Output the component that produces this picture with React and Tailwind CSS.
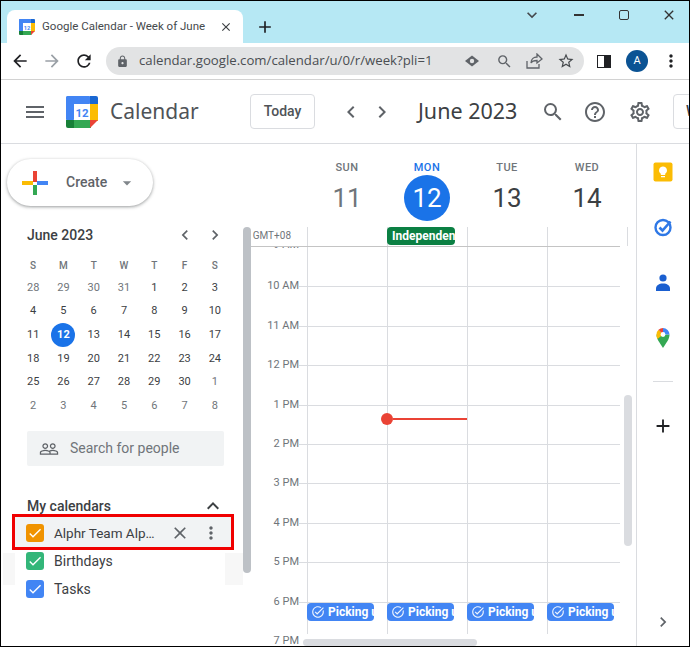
import React from "react";
import {
  MdMenu, MdChevronLeft, MdChevronRight, MdSearch, MdHelpOutline, MdOutlineSettings,
  MdArrowBack, MdArrowForward, MdRefresh, MdLock, MdStarBorder, MdClose, MdMoreVert,
  MdExpandLess, MdPeopleOutline, MdAdd, MdKeyboardArrowDown, MdCheck, MdArrowDropDown,
  MdOutlineTaskAlt,
} from "react-icons/md";

function CalLogo({ size }) {
  return (
    <svg width={size} height={size} viewBox="0 0 32 32" className="shrink-0">
      <rect x="0" y="0" width="25" height="8" rx="2" fill="#4285f4" />
      <rect x="0" y="0" width="8" height="25" rx="2" fill="#4285f4" />
      <rect x="24" y="8" width="8" height="17" fill="#fbbc04" />
      <rect x="8" y="24" width="17" height="8" fill="#34a853" />
      <path d="M0 24h8v8H2a2 2 0 0 1-2-2z" fill="#188038" />
      <path d="M24 0h6a2 2 0 0 1 2 2v6h-8z" fill="#1967d2" />
      <path d="M24 24h8l-8 8z" fill="#ea4335" />
      <rect x="8" y="8" width="16" height="16" fill="#fff" />
      <text x="16" y="21" textAnchor="middle" fontSize="11.5" fontWeight="700" fontFamily="Roboto, sans-serif" fill="#4285f4">12</text>
    </svg>
  );
}

const miniWeeks = [
  [[28, 0], [29, 0], [30, 0], [31, 0], [1, 1], [2, 1], [3, 1]],
  [[4, 1], [5, 1], [6, 1], [7, 1], [8, 1], [9, 1], [10, 1]],
  [[11, 1], [12, 2], [13, 1], [14, 1], [15, 1], [16, 1], [17, 1]],
  [[18, 1], [19, 1], [20, 1], [21, 1], [22, 1], [23, 1], [24, 1]],
  [[25, 1], [26, 1], [27, 1], [28, 1], [29, 1], [30, 1], [1, 0]],
  [[2, 0], [3, 0], [4, 0], [5, 0], [6, 0], [7, 0], [8, 0]],
];

const hours = ["9 AM", "10 AM", "11 AM", "12 PM", "1 PM", "2 PM", "3 PM", "4 PM", "5 PM"];

function Check({ color }) {
  return (
    <span className="flex h-[18px] w-[18px] shrink-0 items-center justify-center rounded-[3px]" style={{ backgroundColor: color }}>
      <MdCheck size={16} color="#fff" />
    </span>
  );
}

function Picking() {
  return (
    <div className="-ml-px flex h-[18px] w-[67px] items-center gap-[3px] overflow-hidden whitespace-nowrap rounded-[4px] bg-[#4285f4] pl-[4px] text-[12px] font-bold text-white">
      <MdOutlineTaskAlt size={14} className="shrink-0 opacity-90" />
      <span>Picking up</span>
    </div>
  );
}

function HourRow({ label, index }) {
  const widths = ["w-[80px]", "w-[80px]", "w-[80px]", "w-[73px]"];
  return (
    <div className="flex h-[39.4px] shrink-0">
      <div className="w-[56px] shrink-0 text-right text-[11px] leading-[14px] text-[#70757a]">
        <span className={"block " + (index === 0 ? "-translate-y-[9px]" : "-translate-y-[7px]")}>{label}</span>
      </div>
      <div className={"w-[8px] shrink-0 " + (index === 0 ? "" : "border-t border-[#dadce0]")} />
      {widths.map((w, c) => (
        <div key={c} className={"relative shrink-0 border-l border-[#dadce0] " + w + (index === 0 ? "" : " border-t")}>
          {label === "1 PM" && c === 1 ? (
            <div className="absolute left-[-7px] top-[7px] flex items-center">
              <span className="h-[12px] w-[12px] rounded-full bg-[#ea4335]" />
              <span className="h-[2px] w-[74px] bg-[#ea4335]" />
            </div>
          ) : null}
        </div>
      ))}
    </div>
  );
}

export default function App() {
  return (
    <div className="relative box-border flex h-[647px] w-[690px] flex-col overflow-hidden border border-black bg-white font-['Roboto',sans-serif] text-[#3c4043]">
      {/* tab strip */}
      <div className="flex h-[42px] shrink-0 items-end bg-[#b6e8f4] pl-[6px]">
        <div className="flex h-[33px] w-[236px] items-center rounded-t-[8px] bg-white pl-[12px]">
          <CalLogo size={16} />
          <span className="ml-[7px] w-[169px] overflow-hidden whitespace-nowrap text-[11.5px] text-[#45494d]">Google Calendar - Week of June</span>
          <MdClose size={14} className="ml-[8px] text-[#3c4043]" />
        </div>
        <MdAdd size={20} className="mb-[6px] ml-[12px] text-[#202124]" />
        <div className="mb-[18px] ml-auto flex items-center text-[#45494d]">
          <MdKeyboardArrowDown size={20} />
          <span className="ml-[32px] h-[1.5px] w-[10px] bg-[#333]" />
          <span className="ml-[35px] h-[10px] w-[10px] rounded-[2px] border border-[#333]" />
          <MdClose size={16} className="ml-[32px] mr-[12px] text-[#333]" />
        </div>
      </div>
      {/* toolbar */}
      <div className="flex h-[37px] shrink-0 items-center border-b border-[#d2d2d2] bg-white pl-[9px]">
        <MdArrowBack size={20} className="text-[#202124]" />
        <MdArrowForward size={20} className="ml-[12px] text-[#9aa0a6]" />
        <MdRefresh size={20} className="ml-[12px] text-[#202124]" />
        <div className="ml-[12px] flex h-[28px] w-[478px] items-center rounded-full bg-[#e2e3e4] pl-[10px]">
          <MdLock size={13} className="text-[#5f6368]" />
          <span className="ml-[10px] w-[314px] whitespace-nowrap font-['Open_Sans',sans-serif] text-[13.2px] text-[#4a4e52]">calendar.google.com/calendar/u/0/r/week?pli=1</span>
          <svg width="16" height="12" viewBox="0 0 16 12" className="ml-[11px] shrink-0">
            <path d="M8 0.5 15 6l-7 5.5L1 6z" fill="#5f6368" />
            <circle cx="8" cy="6" r="2.2" fill="#e2e3e4" />
          </svg>
          <MdSearch size={17} className="ml-[16px] shrink-0 text-[#5f6368]" />
          <svg width="18" height="16" viewBox="0 0 18 16" fill="none" stroke="#5f6368" strokeWidth="1.3" className="ml-[12px] shrink-0">
            <path d="M2 8v7h12v-4" />
            <path d="M6 10c0-4 3-6 6-6V1l5 5-5 4V7.500c-3 0-5 .5-6 2.500z" />
          </svg>
          <MdStarBorder size={18} className="ml-[14px] shrink-0 text-[#45494d]" />
        </div>
        <span className="ml-[13px] flex h-[13px] w-[14px] border-[1.5px] border-[#202124]">
          <span className="ml-auto h-full w-[6px] bg-[#202124]" />
        </span>
        <span className="ml-[15px] flex h-[22px] w-[22px] items-center justify-center rounded-full bg-[#0b5394] text-[11px] text-white">A</span>
        <MdMoreVert size={20} className="ml-[13px] text-[#202124]" />
      </div>
      {/* calendar header */}
      <div className="flex h-[64px] shrink-0 items-center overflow-hidden border-b border-[#dadce0] pl-[22px]">
        <MdMenu size={24} className="shrink-0 text-[#5f6368]" />
        <div className="ml-[19px]"><CalLogo size={32} /></div>
        <span className="ml-[12px] w-[88px] shrink-0 whitespace-nowrap font-['Noto_Sans',sans-serif] text-[21px] text-[#4f5357]">Calendar</span>
        <span className="ml-[52px] flex h-[35px] w-[65px] shrink-0 items-center justify-center rounded-[4px] border border-[#dadce0] text-[14px] font-medium text-[#4f5357]">Today</span>
        <MdChevronLeft size={24} className="ml-[24px] shrink-0 text-[#5f6368]" />
        <MdChevronRight size={24} className="ml-[7px] shrink-0 text-[#5f6368]" />
        <span className="ml-[24px] w-[100px] shrink-0 whitespace-nowrap font-['Noto_Sans',sans-serif] text-[21.5px] text-[#3c4043]">June 2023</span>
        <MdSearch size={24} className="ml-[23px] shrink-0 text-[#5f6368]" />
        <MdHelpOutline size={24} className="ml-[18px] shrink-0 text-[#5f6368]" />
        <MdOutlineSettings size={24} className="ml-[21px] shrink-0 text-[#5f6368]" />
        <span className="ml-[21px] flex h-[35px] w-[40px] shrink-0 items-center rounded-l-[4px] border border-[#dadce0] pl-[12px] text-[14px] font-medium">W</span>
      </div>
      {/* body */}
      <div className="flex min-h-0 flex-1">
        {/* sidebar */}
        <aside className="flex w-[242px] shrink-0 flex-col overflow-hidden">
          <div className="ml-[6px] mt-[15px] flex h-[47px] w-[146px] shrink-0 items-center rounded-full bg-white pl-[15px] shadow-[0_1px_3px_1px_rgba(60,64,67,.2),0_1px_2px_rgba(60,64,67,.25)]">
            <svg width="26" height="26" viewBox="0 0 26 26">
              <rect x="11" y="1" width="4" height="11" fill="#ea4335" />
              <rect x="15" y="11" width="11" height="4" fill="#4285f4" />
              <rect x="11" y="15" width="4" height="10" fill="#34a853" />
              <rect x="0" y="11" width="11" height="4" fill="#fbbc04" />
            </svg>
            <span className="ml-[18px] text-[14px] font-medium text-[#5f6368]">Create</span>
            <MdArrowDropDown size={20} className="ml-[10px] text-[#80868b]" />
          </div>
          <div className="ml-[26px] mt-[19px] flex h-[20px] w-[198px] shrink-0 items-center">
            <span className="text-[14px] font-medium text-[#3c4043]">June 2023</span>
            <MdChevronLeft size={20} className="ml-auto text-[#5f6368]" />
            <MdChevronRight size={20} className="ml-[10px] text-[#5f6368]" />
          </div>
          <div className="ml-[17px] mt-[9px] grid w-[212px] shrink-0 grid-cols-7 text-center font-medium">
            {["S", "M", "T", "W", "T", "F", "S"].map((d, i) => (
              <span key={i} className="flex h-[22px] items-center justify-center text-[10px] text-[#70757a]">{d}</span>
            ))}
          </div>
          <div className="ml-[17px] grid w-[212px] shrink-0 grid-cols-7 text-[11px] font-normal">
            {miniWeeks.flat().map(([n, k], i) => (
              <span key={i} className={"flex h-[23.7px] items-center justify-center " + (k === 0 ? "text-[#70757a]" : "text-[#3c4043]")}>
                {k === 2 ? (
                  <span className="flex h-[24px] w-[24px] items-center justify-center rounded-full bg-[#1a73e8] font-bold text-white">{n}</span>
                ) : n}
              </span>
            ))}
          </div>
          <div className="ml-[26px] mt-[13px] flex h-[35px] w-[197px] shrink-0 items-center rounded-[2px] bg-[#f1f3f4] pl-[12px] text-[14px] text-[#70757a]">
            <MdPeopleOutline size={20} className="text-[#5f6368]" />
            <span className="ml-[11px]">Search for people</span>
          </div>
          <div className="ml-[26px] mt-[30px] flex h-[20px] w-[196px] shrink-0 items-center text-[14px] font-medium text-[#3c4043]">
            My calendars
            <MdExpandLess size={24} className="ml-auto -mr-[2px]" />
          </div>
          <div className="relative z-10 ml-[14px] mt-[1px] flex h-[30px] w-[216px] shrink-0 items-center bg-[#f1f3f4] pl-[11px] pt-[2px] text-[14px] text-[#3c4043]">
            <Check color="#f09300" />
            <span className="ml-[10px] w-[104px] whitespace-nowrap text-[13.5px]">Alphr Team Alp…</span>
            <MdClose size={20} className="ml-[12px] text-[#5f6368]" />
            <MdMoreVert size={20} className="ml-[11px] text-[#5f6368]" />
            <div className="absolute -inset-[3px] border-[3px] border-[#f00000]" />
          </div>
          <div className="relative text-[14px] text-[#3c4043]">
            <div className="absolute left-[2px] top-[6px] h-[32px] w-[12px] bg-[#f7f7f7]" />
            <div className="absolute left-[224px] top-[6px] h-[32px] w-[18px] bg-[#f7f7f7]" />
            <div className="flex h-[28px] items-center pl-[25px]">
              <Check color="#33b679" />
              <span className="ml-[10px]">Birthdays</span>
            </div>
            <div className="flex h-[28px] items-center pl-[25px]">
              <Check color="#4285f4" />
              <span className="ml-[10px]">Tasks</span>
            </div>
          </div>
        </aside>
        {/* main */}
        <main className="relative flex w-[393px] shrink-0 flex-col overflow-hidden">
          <div className="flex h-[83px] shrink-0 pl-[64px]">
            {[["SUN", "11"], ["MON", "12"], ["TUE", "13"], ["WED", "14"]].map(([d, n], i) => (
              <div key={d} className="flex w-[80px] flex-col items-center pt-[17px]">
                <span className={"text-[11px] font-medium leading-[14px] tracking-[0.5px] " + (i === 1 ? "text-[#1a73e8]" : "text-[#70757a]")}>{d}</span>
                <span className={"flex h-[46px] w-[46px] items-center justify-center rounded-full text-[26px] " + (i === 1 ? "bg-[#1a73e8] text-white" : i === 0 ? "text-[#70757a]" : "text-[#3c4043]")}>{n}</span>
              </div>
            ))}
          </div>
          <div className="mr-[16px] flex h-[20px] shrink-0 border-b border-[#c4c4c4]">
            <div className="w-[48px] shrink-0 pt-[3px] text-right text-[10px] leading-[12px] text-[#70757a]">GMT+08</div>
            <div className="flex flex-1 pl-[16px]">
              {[0, 1, 2, 3, 4].map((c) => (
                <div key={c} className={"shrink-0 border-l border-[#dadce0] " + (c === 4 ? "w-0" : "w-[80px]")}>
                  {c === 1 ? (
                    <div className="-ml-px flex h-[18px] w-[68px] items-center overflow-hidden whitespace-nowrap rounded-[4px] bg-[#0b8043] pl-[5px] text-[12px] font-bold text-white">
                      Independence
                    </div>
                  ) : null}
                </div>
              ))}
            </div>
          </div>
          <div className="flex min-h-0 flex-1 flex-col overflow-hidden">
            {hours.map((h, i) => <HourRow key={h} label={h} index={i} />)}
            <div className="flex h-[39.4px] shrink-0">
              <div className="w-[56px] shrink-0 text-right text-[11px] leading-[14px] text-[#70757a]">
                <span className="block -translate-y-[7px]">6 PM</span>
              </div>
              <div className="h-px w-[8px] shrink-0 bg-[#dadce0]" />
              {["w-[80px]", "w-[80px]", "w-[80px]", "w-[73px]"].map((w, c) => (
                <div key={c} className={"h-[32px] shrink-0 border-l border-t border-[#dadce0] " + w}>
                  <Picking />
                </div>
              ))}
            </div>
            <div className="w-[56px] shrink-0 text-right text-[11px] leading-[14px] text-[#70757a]">
              <span className="block -translate-y-[7px]">7 PM</span>
            </div>
          </div>
          <div className="absolute left-0 top-[83px] h-[346px] w-[8px] rounded-full bg-[#bdc1c6]" />
          <div className="absolute left-[381px] top-[251px] h-[151px] w-[8px] rounded-full bg-[#dadce0]" />
          <div className="absolute bottom-0 left-[60px] h-[7px] w-[174px] rounded-full bg-[#dadce0]" />
        </main>
        {/* side panel */}
        <aside className="flex flex-1 flex-col items-center border-l border-[#dadce0]">
          <svg width="20" height="20" viewBox="0 0 20 20" className="mt-[18px]">
            <rect width="19" height="19" x=".5" y=".5" rx="2" fill="#fbbc04" />
            <path d="M10 4.500a4 4 0 0 0-2.200 7.300V13h4.400v-1.200A4 4 0 0 0 10 4.500zM8 14h4v1.300H8z" fill="#fff" />
          </svg>
          <svg width="20" height="20" viewBox="0 0 20 20" fill="none" className="mt-[35px]">
            <circle cx="10" cy="10.500" r="7.500" stroke="#2f78e6" strokeWidth="2.400" />
            <path d="M6.500 10.500l3 3 8-9" stroke="#2f78e6" strokeWidth="2.600" />
          </svg>
          <svg width="20" height="20" viewBox="0 0 20 20" className="mt-[36px]">
            <circle cx="10" cy="5" r="3.600" fill="#1a5fd0" />
            <path d="M3 18v-2.500c0-3 3-5 7-5s7 2 7 5V18z" fill="#1a5fd0" />
          </svg>
          <svg width="20" height="22" viewBox="0 0 20 22" className="mt-[34px]">
            <path d="M10 21C7 16 3.500 12.500 3.500 7.500L10 7.500l6.500 0c0 5-3.500 8.500-6.500 13.500z" fill="#34a853" />
            <path d="M3.500 7.500a6.500 6.500 0 0 1 2-4.700L10 7.500 4.500 12a8 8 0 0 1-1-4.500z" fill="#fbbc04" />
            <path d="M5.500 2.800A6.500 6.500 0 0 1 10 1v6.500z" fill="#ea4335" />
            <path d="M10 1a6.500 6.500 0 0 1 6.500 6.500H10z" fill="#4285f4" />
            <circle cx="10" cy="7.500" r="2.400" fill="#fff" />
          </svg>
          <div className="mt-[32px] h-px w-[20px] bg-[#dadce0]" />
          <MdAdd size={22} className="mt-[33px] text-[#202124]" />
          <MdChevronRight size={20} className="mb-[14px] mt-auto text-[#5f6368]" />
        </aside>
      </div>
    </div>
  );
}
